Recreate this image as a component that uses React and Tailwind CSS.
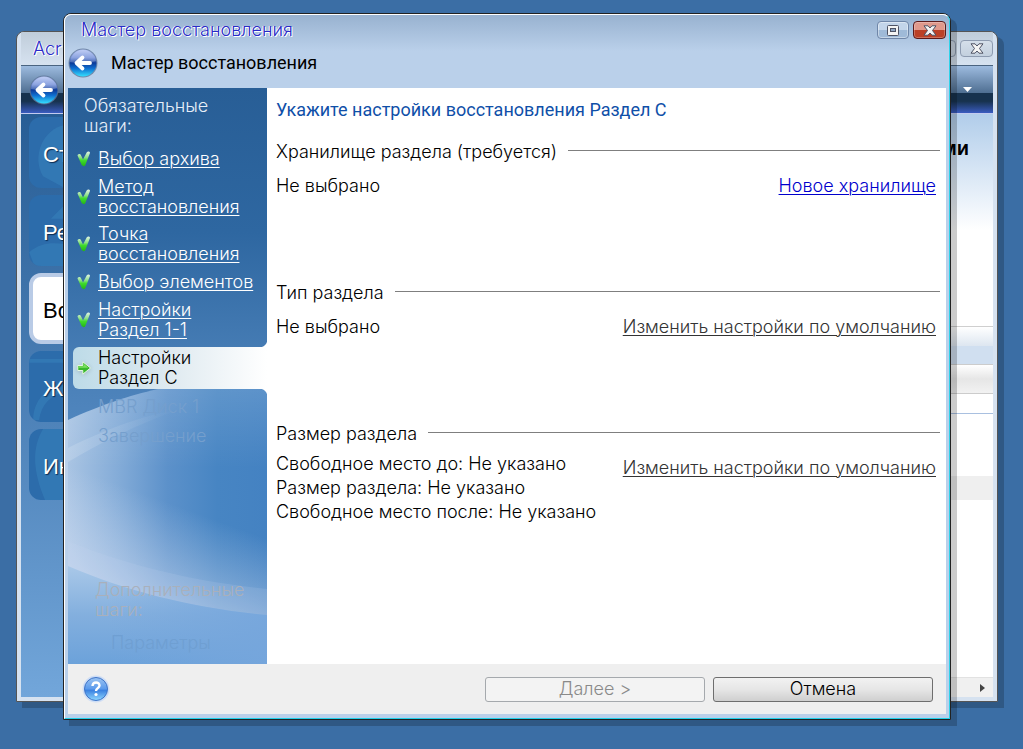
const steps = [
  { lines: ['Выбор архива'], state: 'done' },
  { lines: ['Метод', 'восстановления'], state: 'done' },
  { lines: ['Точка', 'восстановления'], state: 'done' },
  { lines: ['Выбор элементов'], state: 'done' },
  { lines: ['Настройки', 'Раздел 1-1'], state: 'done' },
  { lines: ['Настройки', 'Раздел C'], state: 'current' },
  { lines: ['MBR Диск 1'], state: 'pending' },
  { lines: ['Завершение'], state: 'pending' },
]

const menuItems = [
  { label: 'Ст', shape: 'M14 60C2 40 14 12 36 8v64z' },
  { label: 'Ре', shape: 'M22 24 36 10v14zM0 58c12-10 24-10 36-8v24H6z' },
  { label: 'Во', active: true },
  { label: 'Ж', shape: 'M0 8h36v4H0zM4 70c0-20 14-34 32-36v8C22 44 12 54 10 70z' },
  { label: 'Ин', shape: 'M14 0C2 20 4 44 16 72h20V0z' },
]

function BackIcon({ id }) {
  return (
    <svg viewBox="0 0 30 30" className="size-[30px]" aria-hidden="true">
      <defs>
        <linearGradient id={id} x1="0" y1="0" x2="0" y2="1">
          <stop offset="0" stopColor="#b4c4f4" />
          <stop offset="0.3" stopColor="#6f8cd8" />
          <stop offset="0.5" stopColor="#0d3a98" />
          <stop offset="0.7" stopColor="#0f6fd0" />
          <stop offset="1" stopColor="#35e0ff" />
        </linearGradient>
      </defs>
      <circle cx="15" cy="15" r="14.5" fill="#5f7598" opacity="0.8" />
      <circle cx="15" cy="15" r="13.5" fill={`url(#${id})`} />
      <path d="M2 14C3 6 9 2 15 2s12 4 13 11c-8 3-17 3-26 1z" fill="#fff" opacity="0.2" />
      <path
        d="M14.500 9.500 8.500 15l6 5.500M9 15h13"
        fill="none"
        stroke="#fff"
        strokeWidth="3.800"
        strokeLinejoin="round"
        strokeLinecap="round"
      />
    </svg>
  )
}

function CheckIcon() {
  return (
    <svg viewBox="0 0 14 16" className="h-4 w-3.5 shrink-0" aria-hidden="true">
      <defs>
        <linearGradient id="check" x1="0" y1="0" x2="0" y2="1">
          <stop offset="0" stopColor="#e2f5e6" />
          <stop offset="0.4" stopColor="#8fe08a" />
          <stop offset="0.6" stopColor="#3fdc2c" />
          <stop offset="1" stopColor="#23b416" />
        </linearGradient>
      </defs>
      <path
        d="M.5 4.500C1 2.500 3.500 2.500 4 4.200l2 4.300L9.800 1.200c.8-1.200 3.400-1 3.200.8L8.300 14c-.5 1.600-3 1.600-3.600 0z"
        fill="url(#check)"
      />
    </svg>
  )
}

function ArrowIcon() {
  return (
    <svg viewBox="0 0 14 16" className="h-4 w-3.5 shrink-0 drop-shadow-sm" aria-hidden="true">
      <path
        d="M.8 5.500h5V1.800L13.500 8l-7.700 6.200v-3.700h-5z"
        fill="#39b82c"
        stroke="#e4f5e2"
        strokeWidth="1"
        strokeLinejoin="round"
      />
      <path d="M1.500 6.300h5.200V3.800L11.500 7.800H1.500z" fill="#7be05f" />
    </svg>
  )
}

function CloseGlyph() {
  return (
    <svg viewBox="0 0 14 11" className="h-[11px] w-3.5" aria-hidden="true">
      <path
        d="M1 .8h4L7 3 9 .8h4L9.500 5.500 13 10.200H9L7 8l-2 2.200H1l3.500-4.700z"
        fill="#f4f4f4"
        stroke="#4e5364"
        strokeWidth="1"
      />
    </svg>
  )
}

function RestoreGlyph() {
  return (
    <svg viewBox="0 0 14 11" className="h-[11px] w-3.5" aria-hidden="true">
      <rect x="1.500" y="0.500" width="11" height="10" rx="1" fill="#f4f4f4" stroke="#4e5364" />
      <rect x="4.500" y="3.500" width="5" height="3" fill="#8fa6c4" stroke="#4e5364" />
    </svg>
  )
}

function SidebarBackground() {
  return (
    <svg
      viewBox="0 0 199 576"
      preserveAspectRatio="none"
      className="absolute inset-0 h-full w-full"
      aria-hidden="true"
    >
      <defs>
        <linearGradient id="side-top" x1="0" y1="0" x2="0" y2="1">
          <stop offset="0" stopColor="#285e96" />
          <stop offset="0.25" stopColor="#2e67a1" />
          <stop offset="0.5" stopColor="#4a80b8" />
          <stop offset="1" stopColor="#6ea3dc" />
        </linearGradient>
        <linearGradient id="side-lobe" x1="0" y1="0" x2="1" y2="0">
          <stop offset="0" stopColor="#a9c4e3" />
          <stop offset="0.25" stopColor="#84acd8" />
          <stop offset="0.5" stopColor="#5c91ca" />
          <stop offset="0.75" stopColor="#4785c3" />
          <stop offset="1" stopColor="#4482c2" />
        </linearGradient>
        <linearGradient id="side-mist" gradientUnits="userSpaceOnUse" x1="75" y1="405" x2="40" y2="500">
          <stop offset="0" stopColor="#d3dff3" stopOpacity="0" />
          <stop offset="1" stopColor="#d3dff3" stopOpacity="0.6" />
        </linearGradient>
        <linearGradient id="side-haze" gradientUnits="userSpaceOnUse" x1="0" y1="296" x2="0" y2="380">
          <stop offset="0" stopColor="#fff" stopOpacity="0.14" />
          <stop offset="1" stopColor="#fff" stopOpacity="0" />
        </linearGradient>
        <linearGradient id="side-low" x1="0" y1="0" x2="0" y2="1">
          <stop offset="0" stopColor="#a9c8e8" />
          <stop offset="0.5" stopColor="#83afde" />
          <stop offset="1" stopColor="#6ca2da" />
        </linearGradient>
        <linearGradient id="side-low-right" x1="0" y1="0" x2="1" y2="0">
          <stop offset="0.2" stopColor="#76a6dc" stopOpacity="0" />
          <stop offset="1" stopColor="#76a6dc" stopOpacity="0.9" />
        </linearGradient>
        <linearGradient id="side-fade" x1="0" y1="0" x2="1" y2="0">
          <stop offset="0" stopColor="#fff" stopOpacity="0.16" />
          <stop offset="1" stopColor="#fff" stopOpacity="0" />
        </linearGradient>
      </defs>
      <rect width="199" height="576" fill="url(#side-top)" />
      <path d="M0 332C35 316 60 308 90 301L199 280V534C130 526 60 506 0 480z" fill="url(#side-lobe)" />
      <path d="M0 332C35 316 60 308 90 301L199 280V534C130 526 60 506 0 480z" fill="url(#side-haze)" />
      <path d="M0 332C35 316 60 308 90 301L199 280V534C130 526 60 506 0 480z" fill="url(#side-mist)" />
      <path d="M0 360C40 340 80 326 110 322C70 336 30 356 0 374z" fill="url(#side-fade)" />
      <path d="M0 453C60 478 130 494 199 501V534C130 526 60 506 0 480z" fill="#c6daf2" opacity="0.15" />
      <path d="M0 478C60 504 130 521 199 527V576H0z" fill="url(#side-low)" />
      <path d="M0 478C60 504 130 521 199 527V576H0z" fill="url(#side-low-right)" />
    </svg>
  )
}

function Step({ lines, state }) {
  if (state === 'current') {
    return (
      <li className="relative ml-[5px] flex items-center gap-[7px] rounded-l-md bg-linear-to-r from-[#bddbe8] via-[#dfeaf0] to-white py-px pl-1 text-black">
        <span className="absolute -top-2 right-0 size-2 bg-[radial-gradient(circle_at_0_0,transparent_8px,white_9px)]" />
        <span className="absolute right-0 -bottom-2 size-2 bg-[radial-gradient(circle_at_0_100%,transparent_8px,white_9px)]" />
        <ArrowIcon />
        <span className="flex flex-col">
          {lines.map((line) => <span key={line}>{line}</span>)}
        </span>
      </li>
    )
  }

  if (state === 'pending') {
    return (
      <li className="flex min-h-[22px] items-center pl-[30px] text-[#759fcd]">
        {lines.join(' ')}
      </li>
    )
  }

  return (
    <li className="flex min-h-[22px] items-center gap-[7px] pl-[9px] text-white">
      <CheckIcon />
      <a href="#" className="flex flex-col items-start underline decoration-1 underline-offset-2">
        {lines.map((line) => <span key={line}>{line}</span>)}
      </a>
    </li>
  )
}

function Section({ title, action, primary = false, children }) {
  return (
    <section className="min-h-[141px]">
      <div className="flex items-center gap-[11px]">
        <h2>{title}</h2>
        <div className="-mt-1 h-px flex-1 bg-[#7f7f7f]" />
      </div>
      <div className="flex items-start justify-between pt-2 pr-1">
        <div className="leading-6">{children}</div>
        <a
          href="#"
          className={
            'mt-1.5 underline decoration-1 underline-offset-2 ' +
            (primary ? 'text-[#0000cc]' : 'text-[#333333]')
          }
        >
          {action}
        </a>
      </div>
    </section>
  )
}

function MainWindow() {
  return (
    <div className="absolute top-[31px] right-[25px] bottom-[47px] left-4 flex flex-col overflow-hidden rounded-t-lg border border-[#555555] bg-[#d6e2f0] px-1 pb-1 shadow-[6px_6px_0_rgba(0,0,0,0.2)]">
      <div className="flex h-[33px] shrink-0 items-center justify-between bg-linear-to-b from-[#c0cdda] to-[#d6e2f0] pl-3">
        <span className="text-[#2a2ac8] [text-shadow:1px_1px_0_white,-1px_0_0_white]">Acr</span>
        <div className="flex gap-1">
          <button
            aria-label="Развернуть"
            className="flex h-[17px] w-8 items-center justify-center rounded-sm border border-[#8d9bb0] bg-[#ccd8e5]"
          >
            <RestoreGlyph />
          </button>
          <button
            aria-label="Закрыть"
            className="flex h-[17px] w-[33px] items-center justify-center rounded-sm border border-[#8d9bb0] bg-linear-to-b from-[#d5dfea] to-[#c3d0de]"
          >
            <CloseGlyph />
          </button>
        </div>
      </div>
      <div className="flex h-[49px] shrink-0 items-center justify-between border-t border-b border-t-[#4a6480] border-b-[#c3cbef] bg-[linear-gradient(#9dbbdf,#4f6f92_57%,#17324e_58%,#17324e_75%,#3a5cc0)] px-2">
        <button aria-label="Назад">
          <BackIcon id="back-main" />
        </button>
        <svg viewBox="0 0 10 6" className="mr-3 h-1.5 w-2.5" aria-hidden="true">
          <path d="M0 0h9L4.500 5z" fill="#fff" />
        </svg>
      </div>
      <div className="flex min-h-0 flex-1">
        <nav className="w-[200px] bg-linear-to-b from-[#275d95] to-[#72a6da] pt-[3px] pl-2 font-['Liberation_Sans',sans-serif] text-[22px]">
          {menuItems.map(({ label, active, shape }) => (
            <a
              key={label}
              href="#"
              className={
                'relative mb-[7px] flex h-[71px] items-center overflow-hidden rounded-xl pt-1 ' +
                (active
                  ? 'border-4 border-[#b9cbe6] bg-white pl-2.5 text-black'
                  : 'bg-[#2c6cab] pl-3.5 text-white [text-shadow:1px_1px_1px_#0b2b50]')
              }
            >
              {shape && (
                <svg viewBox="0 0 36 72" className="absolute inset-y-0 left-0 h-full w-9" aria-hidden="true">
                  <path d={shape} fill="#3f8fc6" opacity="0.35" />
                </svg>
              )}
              <span className="relative">{label}</span>
            </a>
          ))}
        </nav>
        <div className="flex flex-1 flex-col bg-white">
          <div className="h-[212px] shrink-0 bg-linear-to-b from-[#b1cdea] to-white to-55% pt-6 pr-6 text-right font-['Liberation_Sans',sans-serif] text-[20px] font-bold text-black">
            ми
          </div>
          <div className="h-5 shrink-0 border-t border-[#cfcfcf] bg-linear-to-b from-white to-[#dde6f0]" />
          <div className="h-[18px] shrink-0 bg-[#d0dff0]" />
          <div className="h-[30px] shrink-0 border-y border-[#cccccc] bg-linear-to-b from-white via-[#e6e6e6] via-50% to-[#f2f2f2]" />
          <div className="h-5 shrink-0 border-b border-[#a9c0e0]" />
          <div className="mt-[62px] h-6 shrink-0 bg-[#efefef]" />
          <div className="mt-auto flex h-5 items-center justify-end border-t border-[#e2e2e2] bg-[#f0f0f0] pr-2">
            <svg viewBox="0 0 5 8" className="h-2 w-[5px]" aria-hidden="true">
              <path d="M0 0v8l5-4z" fill="#444" />
            </svg>
          </div>
        </div>
      </div>
    </div>
  )
}

function WizardWindow() {
  return (
    <div className="absolute top-[13px] right-[72px] bottom-[29px] left-[63px] flex flex-col rounded-t-lg border border-[#222222] bg-[#b9d0ea] shadow-[6px_6px_0_rgba(0,0,0,0.2)]">
      <div className="flex min-h-0 flex-1 flex-col rounded-t-[7px] border border-t-white border-r-[#2fd3ea] border-b-[#20d0ea] border-l-white bg-linear-to-b from-[#98b2d0] to-[#bad0ea] to-[36px] px-[3px] pb-1">
        <header className="h-[73px] shrink-0">
          <div className="flex h-[30px] items-center justify-between pl-[13px]">
            <h1 className="text-[#2a2ac8] [text-shadow:1px_1px_0_white,-1px_0_0_white]">
              Мастер восстановления
            </h1>
            <div className="flex gap-1">
              <button
                aria-label="Развернуть"
                className="flex h-[18px] w-8 items-center justify-center rounded-sm border border-[#6f86a8] bg-linear-to-b from-[#c3d5ea] from-50% to-[#9fbad8] to-50% shadow-[inset_0_0_0_1px_rgba(255,255,255,0.4)]"
              >
                <RestoreGlyph />
              </button>
              <button
                aria-label="Закрыть"
                className="flex h-[18px] w-[33px] items-center justify-center rounded-sm border border-[#5c1a1a] bg-linear-to-b from-[#e0998c] from-50% to-[#bb4026] to-50% shadow-[inset_0_0_0_1px_rgba(255,255,255,0.25)]"
              >
                <CloseGlyph />
              </button>
            </div>
          </div>
          <div className="flex h-9 items-center gap-[13px]">
            <button aria-label="Назад">
              <BackIcon id="back-wizard" />
            </button>
            <span className="font-['Roboto',sans-serif] text-[18px] font-normal text-black">
              Мастер восстановления
            </span>
          </div>
        </header>

        <div className="flex min-h-0 flex-1">
          <aside className="relative w-[199px] shrink-0">
            <SidebarBackground />
            <div className="relative flex h-full flex-col pt-2 pb-[11px]">
              <p className="w-40 pl-4 text-[#e6eef8]">Обязательные шаги:</p>
              <ul className="mt-3 flex flex-col gap-[7px]">
                {steps.map((step) => (
                  <Step key={step.lines.join(' ')} lines={step.lines} state={step.state} />
                ))}
              </ul>
              <p className="mt-auto w-[180px] pl-[27px] text-[#a9b0bb]">Дополнительные шаги:</p>
              <p className="mt-[13px] pl-[43px] text-[#6f9fd2]">Параметры</p>
            </div>
          </aside>

          <main className="flex-1 bg-white pt-2.5 pr-1.5 pl-[9px] text-black">
            <p className="mb-5 font-['Roboto',sans-serif] text-[18px] leading-6 font-normal text-[#0f4fa8]">
              Укажите настройки восстановления Раздел C
            </p>
            <Section title="Хранилище раздела (требуется)" action="Новое хранилище" primary>
              <p className="pt-1">Не выбрано</p>
            </Section>
            <Section title="Тип раздела" action="Изменить настройки по умолчанию">
              <p className="pt-1">Не выбрано</p>
            </Section>
            <Section title="Размер раздела" action="Изменить настройки по умолчанию">
              <p>Свободное место до: Не указано</p>
              <p>Размер раздела: Не указано</p>
              <p>Свободное место после: Не указано</p>
            </Section>
          </main>
        </div>

        <footer className="flex h-[50px] shrink-0 items-center gap-2 bg-[#efefef] pr-[13px] pl-3.5">
          <button aria-label="Справка" className="mr-auto">
            <svg viewBox="0 0 28 28" className="size-7" aria-hidden="true">
              <defs>
                <linearGradient id="help" x1="0" y1="0" x2="0" y2="1">
                  <stop offset="0" stopColor="#9cc4f2" />
                  <stop offset="0.5" stopColor="#5a9aec" />
                  <stop offset="0.55" stopColor="#3a80e0" />
                  <stop offset="1" stopColor="#8fd8ff" />
                </linearGradient>
              </defs>
              <circle cx="14" cy="14" r="13.500" fill="#cfdef5" />
              <circle cx="14" cy="14" r="11.500" fill="url(#help)" stroke="#3f74c8" />
              <path
                d="M10.500 11c.2-4.500 7-4.500 7-.5 0 2.500-3.500 2.800-3.500 5.500"
                fill="none"
                stroke="#fff"
                strokeWidth="2.400"
              />
              <circle cx="14" cy="19.500" r="1.600" fill="#fff" />
            </svg>
          </button>
          <button
            disabled
            className="h-[25px] w-[220px] rounded-[3px] border border-[#a5a9ad] bg-[#f3f3f3] text-[#8a8a8a]"
          >
            Далее &gt;
          </button>
          <button className="h-[25px] w-[220px] rounded-[3px] border border-[#6e6e6e] bg-linear-to-b from-[#f2f2f2] via-[#e6e6e6] via-50% to-[#cfcfcf] text-black">
            Отмена
          </button>
        </footer>
      </div>
    </div>
  )
}

export default function App() {
  return (
    <div className="relative h-screen overflow-hidden bg-[#3b6ea5] font-['Inter','Liberation_Sans',sans-serif] text-[18px] leading-5 font-light">
      <MainWindow />
      <WizardWindow />
    </div>
  )
}
